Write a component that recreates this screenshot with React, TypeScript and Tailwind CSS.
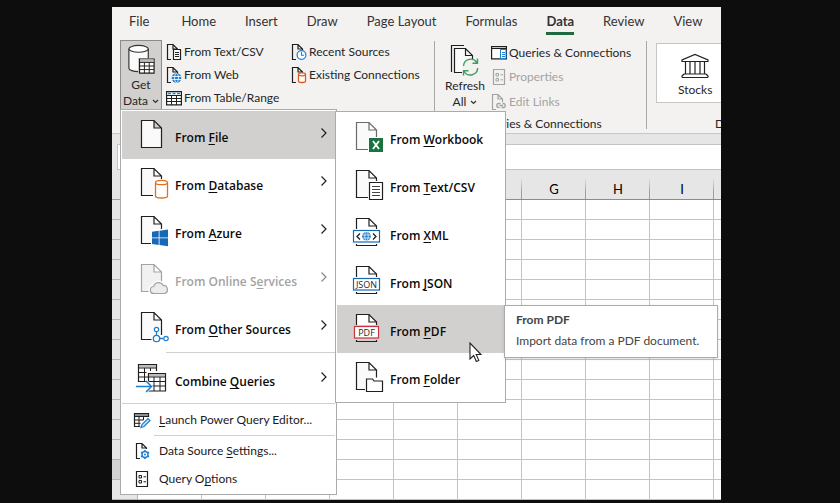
import type { ReactNode } from "react";

const INK = "#1f1f1f";
const BLUE = "#1e7fd0";

/* ---------- small 16px ribbon icons ---------- */

function SmallDoc({ children, color = INK }: { children?: ReactNode; color?: string }) {
  return (
    <svg width="16" height="18" viewBox="0 0 16 18" fill="none" className="shrink-0" aria-hidden="true">
      <path d="M5 16.5H1.5V1.5H7L11.5 6V9M7 1.5V6H11.5" stroke={color} strokeWidth="1.2" fill="none" />
      {children}
    </svg>
  );
}

const TextCsvSmall = () => (
  <SmallDoc>
    <path d="M7.5 6.5h7v10h-7z" fill="#fff" stroke={INK} strokeWidth="1.2" />
    <path d="M9 9.5h4M9 11.5h4M9 13.5h4" stroke={INK} />
  </SmallDoc>
);

const WebSmall = () => (
  <SmallDoc>
    <circle cx="10.5" cy="12" r="4.8" fill={BLUE} />
    <path d="M6 10.5h9M6 13.5h9" stroke="#fff" strokeWidth=".8" />
    <ellipse cx="10.5" cy="12" rx="2" ry="4.6" stroke="#fff" strokeWidth=".8" />
  </SmallDoc>
);

const ClockSmall = () => (
  <SmallDoc>
    <circle cx="10.5" cy="12" r="4.4" fill="#fff" stroke={BLUE} strokeWidth="1.2" />
    <path d="M10.5 9v3.2H13" stroke={BLUE} strokeWidth="1.1" />
  </SmallDoc>
);

const DatabaseSmall = () => (
  <SmallDoc>
    <path d="M7.5 8.5v6.7c0 .8 1.6 1.3 3.5 1.3s3.5-.5 3.5-1.3V8.5" fill="#fff" stroke="#e0571c" strokeWidth="1.3" />
    <ellipse cx="11" cy="8.3" rx="3.5" ry="1.5" fill="#fff" stroke="#e0571c" strokeWidth="1.3" />
  </SmallDoc>
);

const TableSmall = () => (
  <svg width="16" height="16" viewBox="0 0 16 16" fill="none" className="shrink-0" aria-hidden="true">
    <path d="M.6 1.6h14.8v13.3H.6z" fill="#fff" stroke={INK} strokeWidth="1.2" />
    <path d="M.6 5.5h14.8M.6 8.5h14.8M.6 11.5h14.8M5.5 5.5v9.4M10.5 5.5v9.4" stroke={INK} />
    <path d="M2 3.5h3M6.5 3.5h3M11 3.5h3" stroke={BLUE} strokeWidth="1.5" />
  </svg>
);

const QueriesSmall = () => (
  <svg width="16" height="16" viewBox="0 0 16 16" fill="none" className="shrink-0" aria-hidden="true">
    <path d="M.6 1.6h14.8v12.3H.6z" fill="#fff" stroke={INK} strokeWidth="1.2" />
    <path d="M.6 3.5h14.8" stroke={INK} />
    <path d="M9.5 4.5h5.5v9H9.5z" fill="#fff" stroke={BLUE} />
    <path d="M11 7.5h3M11 9.5h3M11 11.5h3" stroke={BLUE} />
  </svg>
);

function OptionsSmall({ color = INK }: { color?: string }) {
  return (
    <svg width="16" height="16" viewBox="0 0 16 16" fill="none" className="shrink-0" aria-hidden="true">
      <path d="M2.5.5h11v15h-11z" stroke={color} strokeWidth="1.2" />
      <path d="M5 4.5h2.5v2.5H5zM5 9.5h2.5V12H5zM9.5 5.8H12M9.5 10.8H12" stroke={color} />
    </svg>
  );
}

const EditLinksSmall = () => (
  <SmallDoc color="#a3a3a3">
    <path
      d="M8.5 14.5H7.8a2 2 0 0 1 0-4h1.7M10.5 14.5h1.7a2 2 0 0 0 0-4h-.7M8.5 12.5h3.5"
      stroke="#a3a3a3"
      strokeWidth="1.3"
    />
  </SmallDoc>
);

/* ---------- large ribbon icons ---------- */

const GetDataIcon = () => (
  <svg width="30" height="32" viewBox="0 0 30 32" fill="none" aria-hidden="true">
    <path d="M2.5 5v20c0 2 4.5 3.5 10 3.5s10-1.5 10-3.5V5" fill="#fafafa" stroke="#333" strokeWidth="1.2" />
    <ellipse cx="12.5" cy="5" rx="10" ry="3.5" fill="#fff" stroke="#333" strokeWidth="1.2" />
    <path d="M12 14.5h17v16H12z" fill="#d2d0ce" />
    <path d="M13.5 15.5h15v14.5h-15z" fill="#fff" stroke={INK} strokeWidth="1.2" />
    <path d="M14 16h14v2.5H14z" fill="#bdbdbd" />
    <path d="M13.5 19h15M13.5 22.7h15M13.5 26.4h15M18.5 19v11M23.5 19v11" stroke={INK} />
  </svg>
);

const RefreshIcon = () => (
  <svg width="30" height="32" viewBox="0 0 30 32" fill="none" aria-hidden="true">
    <path d="M1.5 28V1.5H14" stroke={INK} strokeWidth="1.2" />
    <path d="M12 28.5H4.5V4.5H15.5L22.5 11.5V15M15.5 4.5V11.5H22.5" fill="#fafafa" stroke={INK} strokeWidth="1.2" />
    <circle cx="20.5" cy="23" r="8" fill="#f3f2f1" />
    <path
      d="M13.5 22a7.3 7.3 0 0 1 13.4-3.5M27.5 14.5v4.7h-5M27.7 24a7.3 7.3 0 0 1-13.5 3.5M13.5 31.5v-4.7h5"
      stroke="#3f9c63"
      strokeWidth="1.4"
    />
  </svg>
);

const StocksIcon = () => (
  <svg width="28" height="26" viewBox="0 0 28 26" fill="none" stroke="#222" strokeWidth="1.2" aria-hidden="true">
    <path d="M1 8.5V7L14 1.5 27 7v1.5zM4.5 8.5V21M9 8.5V21M14 8.5V21M19 8.5V21M23.5 8.5V21M3 21h22M1 24.5V23l2-2M27 24.5V23l-2-2M1 24.5h26" />
  </svg>
);

function Chevron() {
  return (
    <svg width="7" height="5" viewBox="0 0 7 5" fill="none" aria-hidden="true" className="ml-1 inline-block">
      <path d="M1 1l2.5 2.5L6 1" stroke="#333" strokeWidth="1.2" />
    </svg>
  );
}

/* ---------- 32px menu icons ---------- */

function MenuSvg({ children }: { children: ReactNode }) {
  return (
    <svg width="36" height="34" viewBox="0 0 36 34" fill="none" className="shrink-0" aria-hidden="true">
      {children}
    </svg>
  );
}

function Doc({ color = INK, fill = "#fafafa" }: { color?: string; fill?: string }) {
  return (
    <path d="M5.5 2.5H18L25.5 10V29.5H5.5zM18 2.5V10H25.5" fill={fill} stroke={color} strokeWidth="1.2" />
  );
}

const FileIcon = () => (
  <MenuSvg>
    <Doc />
  </MenuSvg>
);

const DatabaseIcon = () => (
  <MenuSvg>
    <Doc />
    <path d="M17 13h17v20H17z" fill="#fff" />
    <path d="M19.5 16.5V30c0 1.2 2.7 2 6 2s6-.8 6-2V16.5" fill="#fff" stroke="#e0701c" strokeWidth="1.3" />
    <ellipse cx="25.5" cy="16.5" rx="6" ry="2.2" fill="#fff" stroke="#e0701c" strokeWidth="1.3" />
  </MenuSvg>
);

const AzureIcon = () => (
  <MenuSvg>
    <Doc />
    <path d="M15 15h18v18H15z" fill="#fff" />
    <path
      d="M16 17.8l6.7-1v6.7H16zM23.5 16.7L32 15.5v8h-8.5zM16 24.3h6.7V31L16 30zM23.5 24.3H32v8l-8.5-1.2z"
      fill="#1769b8"
    />
  </MenuSvg>
);

const CLOUD = "M18 31.5a3.5 3.5 0 0 1-.3-7 5 5 0 0 1 9.3-1.2 4.2 4.2 0 0 1 1.5 8.2z";

const CloudIcon = () => (
  <MenuSvg>
    <Doc color="#a3a3a3" fill="#f1f1f1" />
    <path d={CLOUD} fill="#ececec" stroke="#fff" strokeWidth="4" />
    <path d={CLOUD} fill="#ececec" stroke="#a3a3a3" strokeWidth="1.2" />
  </MenuSvg>
);

const OtherIcon = () => (
  <MenuSvg>
    <Doc />
    <path d="M17 17h7v8h9v8H15.5v-8z" fill="#fff" />
    <path d="M20.5 22v3M24 28.5h3.5" stroke={BLUE} strokeWidth="1.3" />
    <circle cx="20.5" cy="19.5" r="2.2" fill="#fff" stroke={BLUE} strokeWidth="1.2" />
    <circle cx="20.5" cy="28.5" r="3.2" fill="#fff" stroke={BLUE} strokeWidth="1.3" />
    <circle cx="30" cy="28.5" r="2.2" fill="#fff" stroke={BLUE} strokeWidth="1.2" />
  </MenuSvg>
);

const CombineIcon = () => (
  <MenuSvg>
    <path d="M2.5 2.5h18v17h-18z" fill="#fff" stroke={INK} strokeWidth="1.2" />
    <path d="M3 3h17v2.5H3z" fill="#bdbdbd" />
    <path d="M2.5 6h18M2.5 10.5h18M2.5 15h18M8.5 6v13.5M14.5 6v13.5" stroke={INK} />
    <path d="M10.5 9h20v3h-20z" fill="#fff" />
    <path d="M12.5 11.5h17v17.5h-17z" fill="#fff" stroke={INK} strokeWidth="1.2" />
    <path d="M13 12h16v2.5H13z" fill="#bdbdbd" />
    <path d="M12.5 15h17M12.5 19.5h17M12.5 24h17M18 15v14M24 15v14" stroke={INK} />
    <path d="M0 24.5h14M10 19.5l5 5-5 5" stroke="#fff" strokeWidth="3.5" />
    <path d="M0 24.5h15M10 19l5.5 5.5L10 30" stroke={BLUE} strokeWidth="1.5" />
  </MenuSvg>
);

const WorkbookIcon = () => (
  <MenuSvg>
    <Doc color="#6b6b6b" />
    <path d="M17 17h16v16H17z" fill="#fff" />
    <path d="M18 18h14v14H18z" fill="#18743f" />
    <path d="M22 21l6 8M28 21l-6 8" stroke="#fff" strokeWidth="1.9" />
  </MenuSvg>
);

const TextCsvIcon = () => (
  <MenuSvg>
    <Doc />
    <path d="M17 13h16v20H17z" fill="#fff" />
    <path d="M18.5 14.5h13v17h-13z" fill="#fff" stroke={INK} strokeWidth="1.2" />
    <path d="M21 18.5h8M21 21.5h8M21 24.5h8M21 27.5h8" stroke="#444" />
  </MenuSvg>
);

/* A page with a labelled band across it. */
function Banner({ color, x = 2, w = 26, children }: { color: string; x?: number; w?: number; children: ReactNode }) {
  return (
    <MenuSvg>
      <path d="M5.5 13V2.5H18L25.5 10V13" fill="#fff" stroke={INK} strokeWidth="1.2" />
      <path d="M18 2.5V10H25.5M5.5 28v1.5h20V28" stroke={INK} strokeWidth="1.2" />
      <rect x={x + 0.5} y="14.5" width={w} height="11.5" fill="#fff" stroke={color} strokeWidth="1.2" />
      {children}
    </MenuSvg>
  );
}

const XmlIcon = () => (
  <Banner color="#1769b8">
    <path d="M9 17.5l-3 3 3 3M22 17.5l3 3-3 3" stroke={INK} strokeWidth="1.3" />
    <circle cx="15.5" cy="20.3" r="4.3" fill={BLUE} />
    <path d="M11.5 19h8M11.5 22h8" stroke="#fff" strokeWidth=".7" />
    <ellipse cx="15.5" cy="20.3" rx="1.8" ry="4.2" stroke="#fff" strokeWidth=".7" />
  </Banner>
);

const JsonIcon = () => (
  <Banner color="#1769b8">
    <text x="15.5" y="24" textAnchor="middle" fontSize="9" fontWeight="400" fill={INK}>JSON</text>
  </Banner>
);

const PdfIcon = () => (
  <Banner color="#c9343f" x={3} w={24}>
    <text x="15.5" y="24" textAnchor="middle" fontSize="9" fontWeight="400" fill={INK}>PDF</text>
  </Banner>
);

const FolderIcon = () => (
  <MenuSvg>
    <Doc />
    <path d="M14 17.5h19V33H14z" fill="#fff" />
    <path d="M15.5 31.5V19h6l1.5 2h8.5v10.5z" fill="#fff" stroke={INK} strokeWidth="1.2" />
  </MenuSvg>
);

/* ---------- small menu icons ---------- */

const EditorIcon = () => (
  <svg width="18" height="18" viewBox="0 0 18 18" fill="none" className="shrink-0" aria-hidden="true">
    <path d="M7 15.5H1.5v-13h14V6" stroke={INK} strokeWidth="1.2" />
    <path d="M2 3h13v2H2z" fill="#8f8f8f" />
    <path d="M1.5 5.5h14M1.5 9h9M1.5 12.3h6M6 5.5v10M10.5 5.5V9" stroke={INK} />
    <path d="M8 16.5l1-3 6-6 2 2-6 6z" fill="#cfe4f7" stroke={BLUE} strokeWidth="1.2" />
  </svg>
);

const SettingsIcon = () => (
  <svg width="18" height="18" viewBox="0 0 18 18" fill="none" className="shrink-0" aria-hidden="true">
    <path d="M7 16.5H3.5v-15H9L13.5 6v1M9 1.5V6h4.5" stroke={INK} strokeWidth="1.2" />
    <circle cx="12" cy="12.5" r="3" stroke={BLUE} strokeWidth="1.4" />
    <circle cx="12" cy="12.5" r="1" fill={BLUE} />
    <path
      d="M12 8v1.5M12 15.5V17M8 10.3l1.4.8M14.6 13.9l1.4.8M8 14.7l1.4-.8M14.6 11.1l1.4-.8"
      stroke={BLUE}
      strokeWidth="1.7"
    />
  </svg>
);

/* ---------- shared pieces ---------- */

/* "&" marks the letter that is the access key. */
function Label({ text }: { text: string }) {
  const at = text.indexOf("&");
  if (at < 0) return <>{text}</>;
  return (
    <>
      {text.slice(0, at)}
      <span className="underline underline-offset-2 [text-decoration-skip-ink:none]">{text[at + 1]}</span>
      {text.slice(at + 2)}
    </>
  );
}

function RibbonCommand({ icon, label, disabled }: { icon: ReactNode; label: string; disabled?: boolean }) {
  return (
    <button
      type="button"
      disabled={disabled}
      className="flex flex-1 items-center gap-[2px] text-xs whitespace-nowrap disabled:text-[#a3a3a3]"
    >
      {icon}
      {label}
    </button>
  );
}

type Item = { label: string; icon: ReactNode; active?: boolean; disabled?: boolean; arrow?: boolean };

function BigItem({ label, icon, active, disabled, arrow }: Item) {
  return (
    <li role="none">
      <button
        type="button"
        role="menuitem"
        disabled={disabled}
        className={`flex h-12 w-full items-center pl-[14px] text-left font-['Open_Sans','Noto_Sans',sans-serif] text-xs font-semibold whitespace-nowrap text-[#0a0a0a] disabled:text-[#a3a3a3] ${
          active ? "bg-[#d2d0ce]" : ""
        }`}
      >
        {icon}
        <span className="flex-1 pt-[6px] pl-[3px]">
          <Label text={label} />
        </span>
        {arrow && (
          <svg width="8" height="12" viewBox="0 0 8 12" fill="none" className="mr-[7px] mb-1" aria-hidden="true">
            <path d="M1.5 1.5L6 6l-4.5 4.5" stroke={disabled ? "#8a8a8a" : INK} strokeWidth="1.2" />
          </svg>
        )}
      </button>
    </li>
  );
}

function SmallItem({ label, icon }: Item) {
  return (
    <li role="none">
      <button type="button" role="menuitem" className="flex h-7 w-full items-center gap-2 pl-[11px] text-left text-xs whitespace-nowrap">
        {icon}
        <span>
          <Label text={label} />
        </span>
      </button>
    </li>
  );
}

const tabs = ["File", "Home", "Insert", "Draw", "Page Layout", "Formulas", "Data", "Review", "View"];

const sources: Item[] = [
  { label: "From &File", icon: <FileIcon />, active: true },
  { label: "From &Database", icon: <DatabaseIcon /> },
  { label: "From &Azure", icon: <AzureIcon /> },
  { label: "From Online S&ervices", icon: <CloudIcon />, disabled: true },
  { label: "From &Other Sources", icon: <OtherIcon /> },
];

const fileTypes: Item[] = [
  { label: "From &Workbook", icon: <WorkbookIcon /> },
  { label: "From &Text/CSV", icon: <TextCsvIcon /> },
  { label: "From &XML", icon: <XmlIcon /> },
  { label: "From &JSON", icon: <JsonIcon /> },
  { label: "From &PDF", icon: <PdfIcon />, active: true },
  { label: "From &Folder", icon: <FolderIcon /> },
];

const columns = ["A", "B", "C", "D", "E", "F", "G", "H", "I", "J"];
const rows = Array.from({ length: 15 }, (_, i) => i + 1);

function Tabs() {
  return (
    <nav className="flex h-[33px] items-start gap-[29px] pl-[17px] text-[13px] text-[#333]">
      {tabs.map((t) => (
        <button
          key={t}
          type="button"
          className={`h-7 border-b-[3px] pt-1 whitespace-nowrap first:mr-[3px] ${
            t === "Data" ? "border-[#1e6b41] font-bold" : "border-transparent"
          }`}
        >
          {t}
        </button>
      ))}
    </nav>
  );
}

function Ribbon() {
  return (
    <div className="flex h-[94px] border-b border-[#c6c6c6] text-xs text-[#262626]">
      <button
        type="button"
        className="ml-2 flex h-[70px] w-[42px] shrink-0 flex-col items-center border border-[#8c8c8c] bg-[#d2d0ce] pt-[3px] leading-4"
      >
        <GetDataIcon />
        <span className="pt-[2px]">Get</span>
        <span className="whitespace-nowrap">
          Data
          <Chevron />
        </span>
      </button>
      <div className="flex h-[70px] w-[126px] shrink-0 flex-col pl-1">
        <RibbonCommand icon={<TextCsvSmall />} label="From Text/CSV" />
        <RibbonCommand icon={<WebSmall />} label="From Web" />
        <RibbonCommand icon={<TableSmall />} label="From Table/Range" />
      </div>
      <div className="flex h-[46px] w-[146px] shrink-0 flex-col pl-[3px]">
        <RibbonCommand icon={<ClockSmall />} label="Recent Sources" />
        <RibbonCommand icon={<DatabaseSmall />} label="Existing Connections" />
      </div>
      <div className="mt-px mb-1 flex w-[213px] shrink-0 flex-col border-x border-[#a8a8a8]">
        <div className="flex h-[73px] shrink-0 pl-2">
          <button type="button" className="flex w-[44px] flex-col items-center pt-[3px] leading-4">
            <RefreshIcon />
            <span className="pt-[2px]">Refresh</span>
            <span className="whitespace-nowrap">
              All
              <Chevron />
            </span>
          </button>
          <div className="flex flex-col pl-1">
            <RibbonCommand icon={<QueriesSmall />} label="Queries & Connections" />
            <RibbonCommand icon={<OptionsSmall color="#a3a3a3" />} label="Properties" disabled />
            <RibbonCommand icon={<EditLinksSmall />} label="Edit Links" disabled />
          </div>
        </div>
        <div className="text-center leading-5">Queries &amp; Connections</div>
      </div>
      <div className="flex w-[196px] shrink-0 flex-col pl-[9px]">
        <button
          type="button"
          className="mt-[3px] flex h-[60px] shrink-0 flex-col items-start border border-[#c6c6c6] bg-white pt-2 pl-[21px]"
        >
          <span className="flex flex-col items-center">
            <span className="flex h-7 items-center">
              <StocksIcon />
            </span>
            <span className="leading-5">Stocks</span>
          </span>
        </button>
        <div className="pt-[11px] pl-[59px] leading-5">Data Types</div>
      </div>
    </div>
  );
}

function Sheet() {
  return (
    <table className="w-[666px] table-fixed border-separate border-spacing-0">
      <thead>
        <tr className="h-[30px] bg-[#e6e6e6]">
          <th className="w-[26px] border-r border-b border-[#9f9f9f]" />
          {columns.map((c) => (
            <th
              key={c}
              scope="col"
              className="w-16 border-b border-[#8c8c8c] bg-[linear-gradient(to_bottom,transparent_25%,#9f9f9f_75%)] bg-[length:1px_100%] bg-right bg-no-repeat p-0 pt-[10px] text-[13px] leading-none font-normal"
            >
              {c}
            </th>
          ))}
        </tr>
      </thead>
      <tbody>
        {rows.map((r) => (
          <tr key={r} className="h-5">
            <th
              scope="row"
              className={`border-r border-b border-[#b5b5b5] p-0 text-[13px] leading-none font-normal ${
                r === 14 ? "bg-[#d2d2d2]" : "bg-[#e6e6e6]"
              }`}
            />
            {columns.map((c) => (
              <td key={c} className="border-r border-b border-[#c3c3c3] p-0" />
            ))}
          </tr>
        ))}
      </tbody>
    </table>
  );
}

function GetDataMenu() {
  return (
    <ul role="menu" className="absolute top-[102px] left-2 w-[217px] border border-[#ababab] bg-white p-px text-[#1a1a1a]">
      {sources.map((s) => (
        <BigItem key={s.label} {...s} arrow />
      ))}
      <li role="separator" className="mt-px mb-[2px] ml-11 h-px bg-[#d0d0d0]" />
      <BigItem label="Combine &Queries" icon={<CombineIcon />} arrow />
      <li role="separator" className="mb-[2px] h-px bg-[#d0d0d0]" />
      <SmallItem label="&Launch Power Query Editor..." icon={<EditorIcon />} />
      <li role="separator" className="mt-px mb-px ml-8 h-px bg-[#d0d0d0]" />
      <SmallItem label="Data Source &Settings..." icon={<SettingsIcon />} />
      <SmallItem
        label="Query O&ptions"
        icon={
          <span className="flex w-[18px] justify-center">
            <OptionsSmall />
          </span>
        }
      />
    </ul>
  );
}

function FileMenu() {
  return (
    <ul role="menu" className="absolute top-[104px] left-[223px] w-[171px] border border-[#ababab] bg-white p-px">
      {fileTypes.map((f) => (
        <BigItem key={f.label} {...f} />
      ))}
    </ul>
  );
}

export default function App() {
  return (
    <div className="min-h-screen bg-[#0d0d0d] pt-[7px] pr-[119px] pb-[3px] pl-28 font-['Lato','Open_Sans',sans-serif]">
      <main className="relative overflow-hidden bg-white">
        <header className="bg-[#f3f2f1]">
          <Tabs />
          <Ribbon />
        </header>
        <div className="h-[10px] bg-[#e6e6e6]" />
        <div className="flex h-[26px] bg-[#e6e6e6] pl-[5px]">
          <div className="flex-1 border border-r-0 border-[#c3c3c3] bg-white" />
        </div>
        <Sheet />
        <GetDataMenu />
        <FileMenu />
        <div
          role="tooltip"
          className="absolute top-[298px] left-[392px] w-[214px] border border-[#ababab] bg-white py-[3px] pl-[11px] text-xs text-[#444] shadow-sm"
        >
          <p className="leading-[22px] font-bold">From PDF</p>
          <p className="pb-[3px] leading-5 whitespace-nowrap">Import data from a PDF document.</p>
        </div>
        <svg
          width="14"
          height="21"
          viewBox="0 0 14 21"
          className="absolute top-[335px] left-[357px]"
          aria-hidden="true"
        >
          <path d="M1 1v16l3.7-3.5 2.6 6 2.5-1.1-2.6-5.9H12z" fill="#fff" stroke="#222" strokeWidth="1.1" />
        </svg>
      </main>
    </div>
  );
}
